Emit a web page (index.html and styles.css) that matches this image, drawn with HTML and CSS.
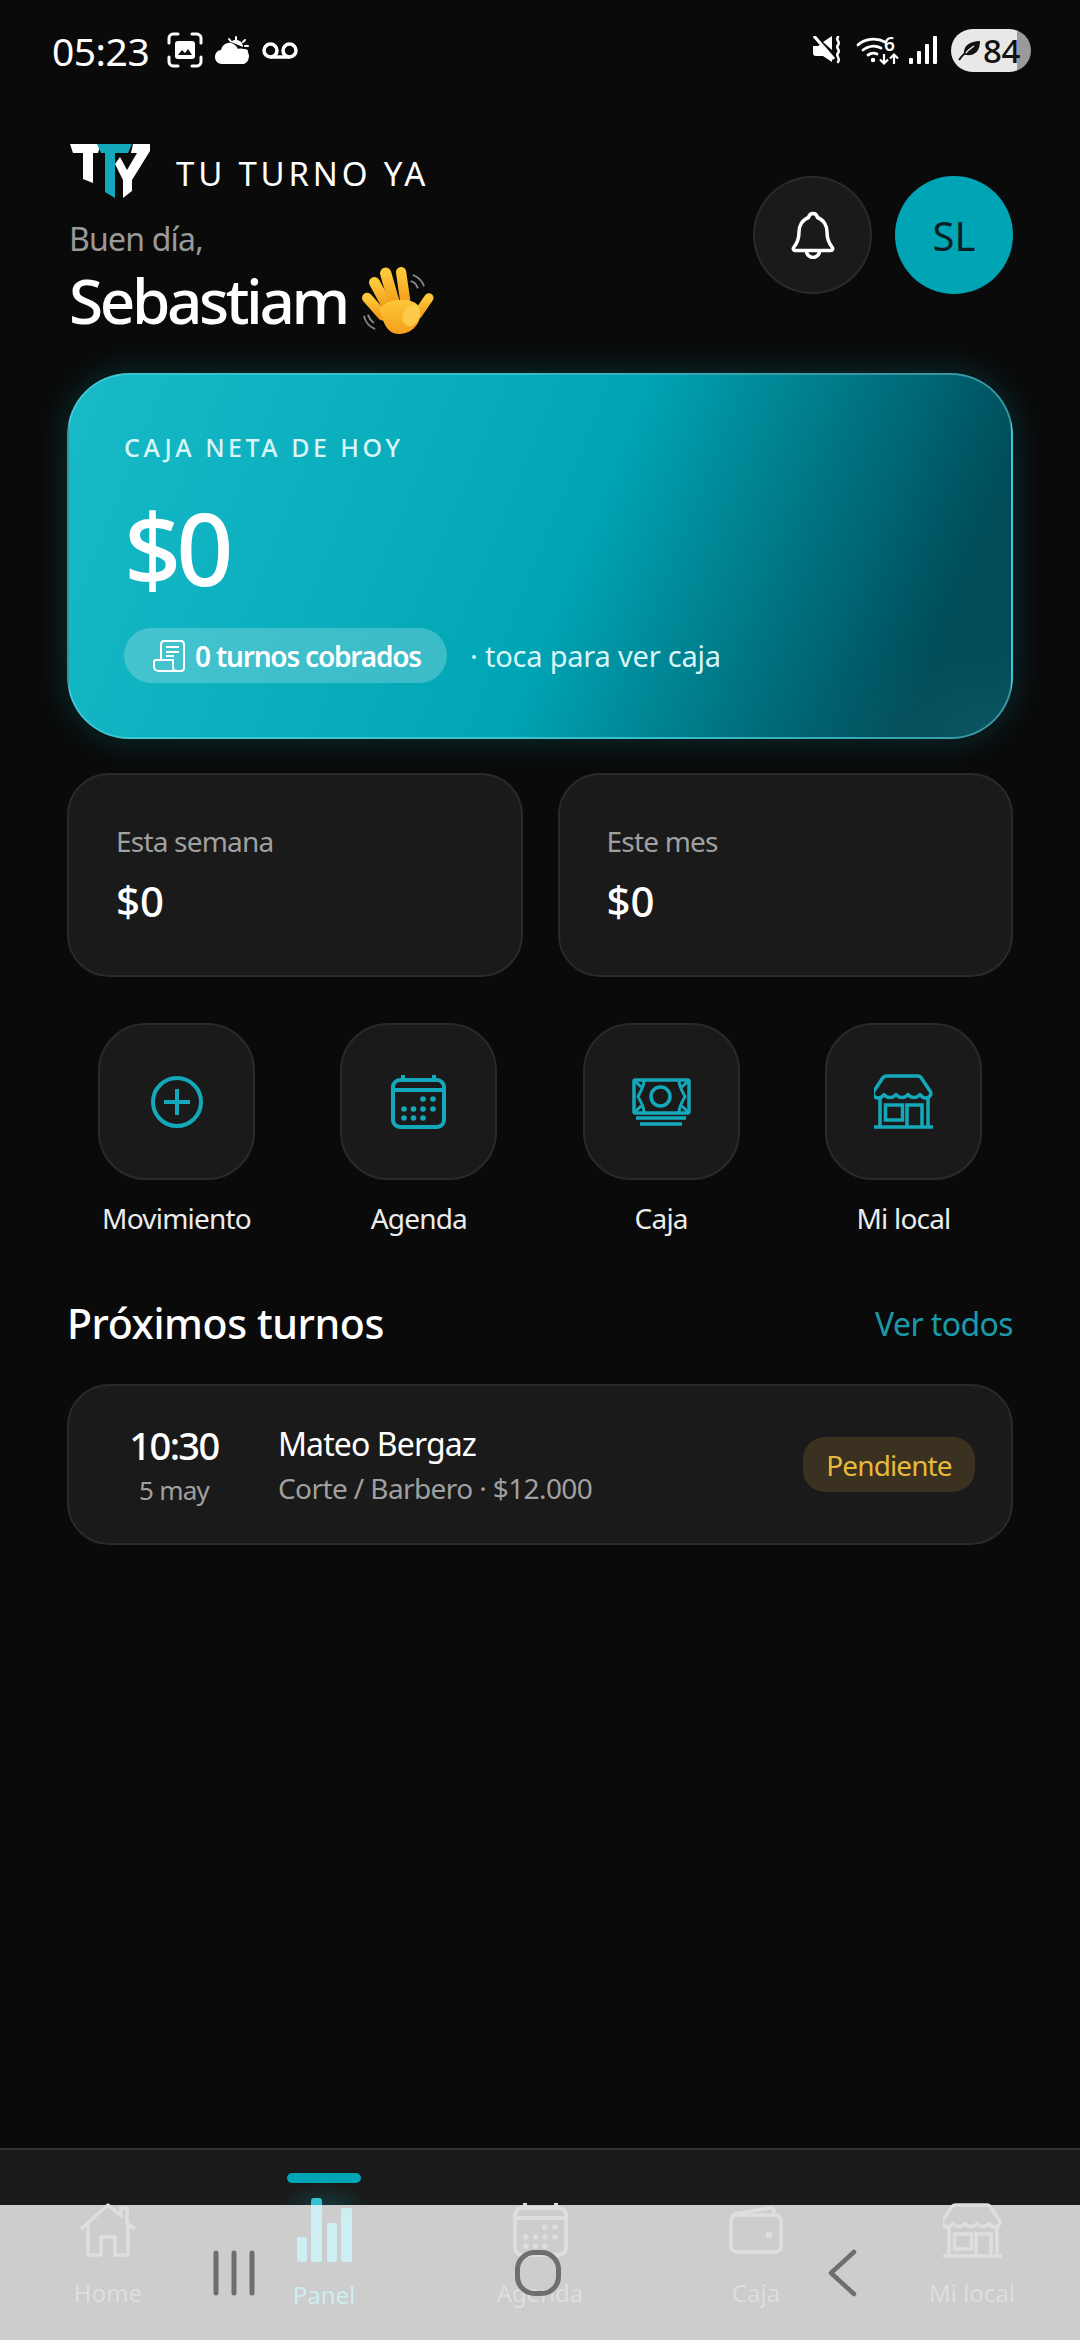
FILE: index.html
```html
<!DOCTYPE html>
<html lang="es">
<head>
    <meta charset="UTF-8">
    <meta name="viewport" content="width=device-width, initial-scale=1.0">
    <title>Tu Turno Ya</title>
    <link rel="stylesheet" href="styles.css">
</head>
<body>
    <!-- shared icons -->
    <svg class="defs" width="0" height="0">
        <symbol id="ico-calendar" viewBox="0 0 55 54">
            <rect x="2" y="5" width="51" height="47" rx="7" fill="none" stroke="currentColor" stroke-width="4"/>
            <path d="M2 15h51M12 0v5M43 0v5" fill="none" stroke="currentColor" stroke-width="4"/>
            <g fill="currentColor">
                <circle cx="32" cy="24" r="2.8"/><circle cx="42" cy="24" r="2.8"/>
                <circle cx="13" cy="34" r="2.8"/><circle cx="22.5" cy="34" r="2.8"/><circle cx="32" cy="34" r="2.8"/><circle cx="42" cy="34" r="2.8"/>
                <circle cx="13" cy="43" r="2.8"/><circle cx="22.5" cy="43" r="2.8"/><circle cx="32" cy="43" r="2.8"/>
            </g>
        </symbol>
        <symbol id="ico-store" viewBox="0 0 59 55">
            <path d="M15 2h29c2 0 3 1 4 3l8 12c2 3 0 6-2 6.500-3 1-6 0-8-3-3 4-9 4-12 0-3 4-9 4-12 0-3 4-9 4-12 0-2 3-5 4-8 3-2-.5-4-3.500-2-6.500l8-12c1-2 2-3 5-3z" fill="none" stroke="currentColor" stroke-width="3.500" stroke-linejoin="round"/>
            <path d="M6 24v29M54 24v29M0 53h59" fill="none" stroke="currentColor" stroke-width="3.500" stroke-linecap="round"/>
            <rect x="11.500" y="31" width="17" height="15" fill="none" stroke="currentColor" stroke-width="3.500"/>
            <path d="M33 53V31h15v22" fill="none" stroke="currentColor" stroke-width="3.500"/>
        </symbol>
    </svg>

    <!-- Status bar -->
    <div class="status-bar">
        <div class="status-left">
            <span class="status-time">05:23</span>
            <svg class="ico-shot" width="36" height="36" viewBox="0 0 36 36">
                <path d="M2 11V6c0-2 2-4 4-4h5M25 2h5c2 0 4 2 4 4v5M34 25v5c0 2-2 4-4 4h-5M11 34H6c-2 0-4-2-4-4v-5" fill="none" stroke="#fff" stroke-width="3" stroke-linecap="round"/>
                <rect x="8" y="9" width="20" height="18" rx="3" fill="#fff"/>
                <path d="M11 23l4-5 3 3 3-4 4 6z" fill="#111"/>
            </svg>
            <svg class="ico-cloud" width="34" height="28" viewBox="0 0 34 28">
                <path d="M7 28C3 28 0 25 0 21c0-4 3-7 6-7 1-5 6-8 10-7 3 .8 6 3 7 6 1-.5 2-.5 3-.5 4 0 8 3 8 7.500s-3 8.500-8 8.500z" fill="#fff"/>
                <path d="M16 6a7 7 0 0 1 12 5" fill="#fff"/>
                <path d="M21 1v3M14 3l2 2.500M30 4l-2 2M33 10h-3M32 15l-2-1" stroke="#fff" stroke-width="2" stroke-linecap="round"/>
            </svg>
            <svg class="ico-voicemail" width="36" height="17" viewBox="0 0 36 17">
                <circle cx="8.500" cy="8.500" r="6.500" fill="none" stroke="#fff" stroke-width="3.500"/>
                <circle cx="27.500" cy="8.500" r="6.500" fill="none" stroke="#fff" stroke-width="3.500"/>
                <path d="M8.500 15h19" stroke="#fff" stroke-width="3.500"/>
            </svg>
        </div>
        <div class="status-right">
            <svg class="ico-mute" width="29" height="28" viewBox="0 0 29 28">
                <path d="M0 10h5l3-2 11 11v7L10 20H3c-2 0-3-1-3-3zM10 6l9-6v14z" fill="#fff"/>
                <path d="M2 1l19 21" stroke="#0a0a0a" stroke-width="2"/>
                <path d="M1 0l20 23" stroke="#fff" stroke-width="3"/>
                <path d="M25 1c-3 3 3 5 0 8s3 5 0 8 3 5 0 9" fill="none" stroke="#fff" stroke-width="2.500" stroke-linecap="round"/>
            </svg>
            <svg class="ico-wifi" width="42" height="29" viewBox="0 0 42 29">
                <path d="M1 9C7 3 19 1 28 6M6 14c5-4 12-5 18-2M11 19c3-2 7-2 9-1" fill="none" stroke="#fff" stroke-width="2.800" stroke-linecap="round"/>
                <circle cx="16" cy="24" r="2.200" fill="#fff"/>
                <text class="wifi-six" x="27" y="15">6</text>
                <path d="M27 18v9M23 23.500l4 4 4-4M37 28v-9M33 22.500l4-4 4 4" fill="none" stroke="#fff" stroke-width="2.200"/>
            </svg>
            <svg class="ico-signal" width="28" height="28" viewBox="0 0 28 28">
                <rect x="0" y="22" width="4" height="6" rx="1" fill="#fff"/>
                <rect x="8" y="15" width="4" height="13" rx="1" fill="#fff"/>
                <rect x="16" y="8" width="4" height="20" rx="1" fill="#fff"/>
                <rect x="24" y="0" width="4" height="28" rx="1" fill="#fff"/>
            </svg>
            <div class="battery">
                <svg width="23" height="24" viewBox="0 0 23 24">
                    <path d="M6 16C5 8 12 3 22 3c0 10-5 15-14 14z" fill="#111"/>
                    <path d="M1 22c4-6 8-9 13-12" fill="none" stroke="#111" stroke-width="2"/>
                    <path d="M8 15c2-3 5-5 8-7" fill="none" stroke="#e8e8e8" stroke-width="1.500"/>
                </svg>
                <span class="battery-num">84</span>
            </div>
        </div>
    </div>

    <div class="page">
        <!-- Header -->
        <div class="header">
            <div class="header-left">
                <div class="brand">
                    <svg width="80" height="55" viewBox="0 0 80 55">
                        <polygon points="0,0 31,0 28,9 23,9 23,39 13,35 13,9 3,9" fill="#fff"/>
                        <polygon points="27,0 62,0 58,9 45,9 45,54 35,48 35,9 31,9" fill="#14a9ba"/>
                        <polygon points="63,0 80,0 80,7 62,36 62,47 53,54 53,36 45,20 50,13 57,26 67,9 61,9" fill="#fff"/>
                    </svg>
                    <span class="brand-name">TU TURNO YA</span>
                </div>
                <p class="greet">Buen día,</p>
                <div class="user-row">
                    <span class="user-name">Sebastiam</span>
                    <svg class="wave" width="74" height="74" viewBox="10 8 72 72">
                        <defs>
                            <linearGradient id="handFill" x1="0" y1="0" x2="0" y2="1">
                                <stop offset="0" stop-color="#fdc83a"/>
                                <stop offset="1" stop-color="#f49f1c"/>
                            </linearGradient>
                        </defs>
                        <path d="M62 17c5 2 8 5 10 10M60 23c3 1 5 3 6 6M14 57c1 5 5 10 10 12M18 56c1 3 2 5 5 7" fill="none" stroke="#8a8a8a" stroke-width="1.800" stroke-linecap="round"/>
                        <g stroke="url(#handFill)" stroke-linecap="round" fill="none">
                            <path d="M17 39l15 17" stroke-width="10"/>
                            <path d="M24 24l12 22" stroke-width="10.500"/>
                            <path d="M35 15l8 28" stroke-width="11"/>
                            <path d="M50 14l4 28" stroke-width="10"/>
                            <path d="M77 39L66 55" stroke-width="9"/>
                        </g>
                        <path d="M29 50c5-9 24-12 35-6 6 4 6 14 2 20-5 8-13 11-20 10-9-1-13-9-17-24z" fill="url(#handFill)"/>
                        <ellipse cx="60" cy="56" rx="8" ry="11" transform="rotate(25 60 56)" fill="#fdd155" opacity=".8"/>
                    </svg>
                </div>
            </div>
            <div class="header-actions">
                <div class="round-btn">
                    <svg width="44" height="48" viewBox="0 0 44 48">
                        <path d="M22 2.500c-3 0-4 2-4.500 4C11 9 8 15 8 21c0 6-1 10-5 15-1.500 2-.5 3.500 2 3.500h34c2.500 0 3.500-1.500 2-3.500-4-5-5-9-5-15 0-6-3-12-9.500-14.500C26 4.500 25 2.500 22 2.500z" fill="none" stroke="#fff" stroke-width="3.500" stroke-linejoin="round"/>
                        <path d="M15.500 40a6.500 6.500 0 0 0 13 0" fill="none" stroke="#fff" stroke-width="3.500"/>
                    </svg>
                </div>
                <div class="avatar">SL</div>
            </div>
        </div>

        <!-- Caja de hoy -->
        <div class="hero">
            <p class="hero-label">CAJA NETA DE HOY</p>
            <p class="hero-amount">$0</p>
            <div class="hero-foot">
                <div class="hero-pill">
                    <svg width="32" height="32" viewBox="0 0 32 32">
                        <path d="M8 20V5c0-2 1-4 3-4h17c2 0 3 2 3 4v23c0 2-1 3-3 3H6c-3 0-5-2-5-4v-5c0-1 1-2 2-2h17v7c0 3 2 4 4 4" fill="none" stroke="#fff" stroke-width="2"/>
                        <path d="M13 7h13M13 12h13M13 16h8" fill="none" stroke="#fff" stroke-width="2.200"/>
                    </svg>
                    <span>0 turnos cobrados</span>
                </div>
                <span class="hero-hint">· toca para ver caja</span>
            </div>
        </div>

        <!-- Semana / mes -->
        <div class="stats">
            <div class="stat-card">
                <p class="stat-label">Esta semana</p>
                <p class="stat-value">$0</p>
            </div>
            <div class="stat-card">
                <p class="stat-label">Este mes</p>
                <p class="stat-value">$0</p>
            </div>
        </div>

        <!-- Accesos rapidos -->
        <div class="quick-row">
            <div class="quick-item">
                <div class="quick-tile">
                    <svg width="52" height="52" viewBox="0 0 52 52">
                        <circle cx="26" cy="26" r="24" fill="none" stroke="currentColor" stroke-width="4"/>
                        <path d="M13 26h26M26 13v26" fill="none" stroke="currentColor" stroke-width="4"/>
                    </svg>
                </div>
                <span class="quick-label">Movimiento</span>
            </div>
            <div class="quick-item">
                <div class="quick-tile"><svg width="55" height="54"><use href="#ico-calendar"/></svg></div>
                <span class="quick-label">Agenda</span>
            </div>
            <div class="quick-item">
                <div class="quick-tile">
                    <svg width="59" height="48" viewBox="0 0 59 48">
                        <rect x="2" y="2" width="55" height="33" rx="1.500" fill="none" stroke="currentColor" stroke-width="3.500"/>
                        <circle cx="28.500" cy="18.500" r="9.500" fill="none" stroke="currentColor" stroke-width="3.500"/>
                        <path d="M12 3c0 5-3 10-6 15.500 3 5.500 6 10.500 6 15.500M47 3c0 5 3 10 6 15.500-3 5.500-6 10.500-6 15.500M3 3l6 6M56 3l-6 6M3 34l6-6M56 34l-6-6" fill="none" stroke="currentColor" stroke-width="3"/>
                        <path d="M4 40h50M8 46h42" fill="none" stroke="currentColor" stroke-width="3.500"/>
                    </svg>
                </div>
                <span class="quick-label">Caja</span>
            </div>
            <div class="quick-item">
                <div class="quick-tile"><svg width="59" height="55"><use href="#ico-store"/></svg></div>
                <span class="quick-label">Mi local</span>
            </div>
        </div>

        <!-- Proximos turnos -->
        <div class="section-head">
            <h2>Próximos turnos</h2>
            <a class="see-all">Ver todos</a>
        </div>
        <div class="turn-card">
            <div class="turn-time">
                <span class="turn-hour">10:30</span>
                <span class="turn-date">5 may</span>
            </div>
            <div class="turn-info">
                <span class="turn-name">Mateo Bergaz</span>
                <span class="turn-detail">Corte / Barbero · $12.000</span>
            </div>
            <span class="turn-badge">Pendiente</span>
        </div>
    </div>

    <!-- Bottom nav -->
    <div class="bottom-nav">
        <div class="sys-scrim"></div>
        <div class="tabs">
            <div class="tab">
                <div class="tab-icon">
                    <svg width="58" height="54" viewBox="0 0 58 54">
                        <path d="M2 26L29 2l13 11V5h6v15l8 6M9 22v30h13V34h14v18h13V22" fill="none" stroke="currentColor" stroke-width="3.500" stroke-linejoin="round"/>
                    </svg>
                </div>
                <span class="tab-label">Home</span>
            </div>
            <div class="tab tab-active">
                <span class="tab-indicator"></span>
                <div class="tab-icon">
                    <svg width="55" height="64" viewBox="0 0 55 64">
                        <rect x="0" y="39" width="10" height="25" rx="2" fill="#cdeef3"/>
                        <rect x="14" y="7" width="11" height="57" fill="#cdeef3"/>
                        <path d="M14 7V3c0-2 1-3 3-3h5c2 0 3 1 3 3v4z" fill="#2fc4d4"/>
                        <rect x="30" y="25" width="10" height="39" rx="2" fill="#cdeef3"/>
                        <rect x="44" y="10" width="11" height="54" rx="2" fill="#cdeef3"/>
                    </svg>
                </div>
                <span class="tab-label">Panel</span>
            </div>
            <div class="tab">
                <div class="tab-icon"><svg width="55" height="54"><use href="#ico-calendar"/></svg></div>
                <span class="tab-label">Agenda</span>
            </div>
            <div class="tab">
                <div class="tab-icon">
                    <svg width="54" height="48" viewBox="0 0 54 48">
                        <path d="M3 12C3 9 4 8 7 7.500L41 2c3 0 4 1 4 3v4" fill="none" stroke="currentColor" stroke-width="3.500"/>
                        <rect x="2" y="9" width="50" height="37" rx="6" fill="none" stroke="currentColor" stroke-width="3.500"/>
                        <circle cx="40" cy="29" r="3.500" fill="currentColor"/>
                    </svg>
                </div>
                <span class="tab-label">Caja</span>
            </div>
            <div class="tab">
                <div class="tab-icon"><svg width="59" height="55"><use href="#ico-store"/></svg></div>
                <span class="tab-label">Mi local</span>
            </div>
        </div>
        <div class="sys-buttons">
            <svg width="44" height="46" viewBox="0 0 44 46">
                <path d="M4 3v40M22 3v40M40 3v40" stroke="#6e6e6e" stroke-width="5" stroke-linecap="round"/>
            </svg>
            <svg width="46" height="46" viewBox="0 0 46 46">
                <rect x="2.500" y="2.500" width="41" height="41" rx="17" fill="none" stroke="#6e6e6e" stroke-width="5"/>
            </svg>
            <svg width="30" height="48" viewBox="0 0 30 48">
                <path d="M27 3L4 24l23 21" fill="none" stroke="#6e6e6e" stroke-width="4.500" stroke-linecap="round" stroke-linejoin="round"/>
            </svg>
        </div>
    </div>
</body>
</html>
```

FILE: styles.css
```css
/* General Styles */
* {
    margin: 0;
    padding: 0;
    box-sizing: border-box;
}

body {
    font-family: "Noto Sans", sans-serif;
    background-color: #0a0a0a;
    color: #fff;
    width: 1080px;
    height: 2340px;
    display: flex;
    flex-direction: column;
    overflow: hidden;
}

.defs {
    position: absolute;
}

/* Status bar */
.status-bar {
    height: 100px;
    padding: 0 49px 0 52px;
    display: flex;
    justify-content: space-between;
    align-items: center;
}

.status-left,
.status-right {
    display: flex;
    align-items: center;
}

.status-time {
    font-size: 39px;
    letter-spacing: -0.5px;
    width: 115px;
}

.ico-cloud {
    margin-left: 12px;
}

.ico-voicemail {
    margin-left: 13px;
}

.ico-wifi {
    margin-left: 15px;
    overflow: visible;
}

.ico-signal {
    margin-left: 10px;
}

.wifi-six {
    font-size: 19px;
    font-weight: 600;
    fill: #fff;
}

.battery {
    margin-left: 14px;
    width: 80px;
    height: 43px;
    border-radius: 22px;
    background: linear-gradient(90deg, #e8e8e8 82%, #9a9a9a 82%);
    color: #111;
    display: flex;
    align-items: center;
    padding-left: 7px;
    gap: 2px;
}

.battery-num {
    font-size: 33px;
    font-weight: 500;
    letter-spacing: -0.5px;
}

/* Page */
.page {
    flex: 1;
    padding: 44px 67px 0;
}

.header {
    display: flex;
    justify-content: space-between;
    margin-left: 2px;
}

.brand {
    display: flex;
    align-items: center;
    gap: 26px;
    margin-left: 1px;
    height: 55px;
}

.brand-name {
    font-size: 33px;
    letter-spacing: 3.8px;
    margin-top: 4px;
}

.greet {
    font-size: 32px;
    line-height: 44px;
    margin-top: 18px;
    color: #9a9a9a;
    letter-spacing: -0.8px;
}

.user-row {
    display: flex;
    align-items: center;
    gap: 13px;
    margin-top: 3px;
    height: 72px;
}

.user-name {
    font-size: 62px;
    font-weight: 500;
    line-height: 72px;
    letter-spacing: -3.4px;
}

.wave {
    margin-top: 6px;
}

.header-actions {
    display: flex;
    gap: 23px;
    padding-top: 32px;
}

.round-btn {
    width: 119px;
    height: 118px;
    border-radius: 50%;
    background-color: #1a1a1a;
    border: 2px solid #2a2a2a;
    display: flex;
    justify-content: center;
    align-items: center;
}

.avatar {
    width: 118px;
    height: 118px;
    border-radius: 50%;
    background-color: #00a5b5;
    color: #0a1f24;
    font-size: 40px;
    display: flex;
    justify-content: center;
    align-items: center;
}

/* Hero card */
.hero {
    margin-top: 37px;
    height: 366px;
    padding: 57px 55px 0;
    border-radius: 62px;
    border: 2px solid rgba(110, 215, 225, 0.5);
    background:
        radial-gradient(ellipse 200px 100px at 100% 100%, rgba(255, 255, 255, 0.05), transparent),
        linear-gradient(112deg, #18bac7 0%, #00a5b5 53%, #004c59 90%);
    box-shadow: 0 0 34px rgba(0, 165, 181, 0.25);
}

.hero-label {
    font-size: 25px;
    font-weight: 500;
    line-height: 30px;
    letter-spacing: 3.5px;
    color: #d9f5f8;
}

.hero-amount {
    font-size: 100px;
    font-weight: 500;
    line-height: 100px;
    margin-top: 35px;
    letter-spacing: -5px;
}

.hero-foot {
    margin-top: 31px;
    display: flex;
    align-items: center;
    gap: 23px;
}

.hero-pill {
    height: 55px;
    width: 323px;
    padding-left: 29px;
    border-radius: 28px;
    background-color: rgba(255, 255, 255, 0.22);
    display: flex;
    align-items: center;
    gap: 10px;
    font-size: 28px;
    font-weight: 600;
    letter-spacing: -1.2px;
}

.hero-hint {
    font-size: 29px;
    color: #d9f5f8;
    letter-spacing: -0.2px;
}

/* Stats */
.stats {
    margin-top: 34px;
    display: grid;
    grid-template-columns: 1fr 1fr;
    gap: 35px;
}

.stat-card {
    height: 204px;
    padding: 46px 47px 0;
    border-radius: 42px;
    background-color: #1a1a1a;
    border: 2px solid #2a2a2a;
}

.stat-label {
    font-size: 28px;
    line-height: 40px;
    color: #a0a0a0;
    letter-spacing: -0.8px;
}

.stat-value {
    font-size: 42px;
    font-weight: 500;
    line-height: 60px;
    margin-top: 10px;
}

/* Quick actions */
.quick-row {
    margin-top: 46px;
    padding: 0 31px;
    display: flex;
    justify-content: space-between;
}

.quick-item {
    width: 157px;
    display: flex;
    flex-direction: column;
    align-items: center;
}

.quick-tile {
    width: 157px;
    height: 157px;
    border-radius: 48px;
    background-color: #1a1a1a;
    border: 2px solid #2a2a2a;
    color: #14a9ba;
    display: flex;
    justify-content: center;
    align-items: center;
}

.quick-label {
    margin-top: 18px;
    font-size: 28px;
    line-height: 40px;
    color: #ececec;
    white-space: nowrap;
    letter-spacing: -0.8px;
}

/* Proximos turnos */
.section-head {
    margin-top: 53px;
    display: flex;
    justify-content: space-between;
    align-items: center;
    height: 64px;
}

.section-head h2 {
    font-size: 41px;
    font-weight: 500;
    letter-spacing: -0.4px;
}

.see-all {
    font-size: 32px;
    color: #1a9aa8;
    letter-spacing: -0.6px;
}

.turn-card {
    margin-top: 29px;
    height: 161px;
    padding: 0 36px 0 51px;
    border-radius: 42px;
    background-color: #1a1a1a;
    border: 2px solid #2a2a2a;
    display: flex;
    align-items: center;
}

.turn-time {
    width: 108px;
    display: flex;
    flex-direction: column;
    align-items: center;
}

.turn-hour {
    font-size: 38px;
    font-weight: 500;
    line-height: 48px;
    letter-spacing: -1.6px;
}

.turn-date {
    font-size: 26px;
    line-height: 36px;
    margin-top: 3px;
    color: #a0a0a0;
    letter-spacing: -0.8px;
}

.turn-info {
    flex: 1;
    margin-left: 50px;
    margin-top: 3px;
    display: flex;
    flex-direction: column;
}

.turn-name {
    font-size: 32px;
    line-height: 44px;
    letter-spacing: -0.9px;
}

.turn-detail {
    font-size: 28px;
    line-height: 44px;
    color: #a0a0a0;
    letter-spacing: -0.6px;
}

.turn-badge {
    width: 172px;
    height: 55px;
    border-radius: 22px;
    background-color: #3a3120;
    color: #e8b93a;
    font-size: 28px;
    letter-spacing: -0.9px;
    display: flex;
    justify-content: center;
    align-items: center;
}

/* Bottom nav */
.bottom-nav {
    position: relative;
    height: 192px;
    border-top: 2px solid #333;
    background:
        radial-gradient(ellipse 46px 22px at 324px 55px, rgba(0, 165, 181, 0.2), transparent),
        #1a1a1a;
}

.sys-scrim {
    position: absolute;
    left: 0;
    right: 0;
    bottom: 0;
    height: 135px;
    background-color: #cdcdcd;
}

.tabs {
    position: relative;
    display: flex;
    filter: blur(0.6px);
}

.tab {
    position: relative;
    flex: 1;
    padding-top: 48px;
    display: flex;
    flex-direction: column;
    align-items: center;
    color: #dedede;
}

.tab-icon {
    height: 64px;
    display: flex;
    justify-content: center;
    align-items: center;
}

.tab-label {
    margin-top: 14px;
    font-size: 24px;
    line-height: 34px;
}

.tab-active {
    color: #cdeef3;
}

.tab-active .tab-label {
    margin-top: 16px;
}

.tab-indicator {
    position: absolute;
    top: 23px;
    left: 71px;
    width: 74px;
    height: 10px;
    border-radius: 5px;
    background-color: #00a5b5;
}

.sys-buttons {
    position: absolute;
    left: 82px;
    right: 86px;
    bottom: 0;
    height: 135px;
    display: grid;
    grid-template-columns: repeat(3, 304px);
    justify-items: center;
    align-items: center;
}
```
